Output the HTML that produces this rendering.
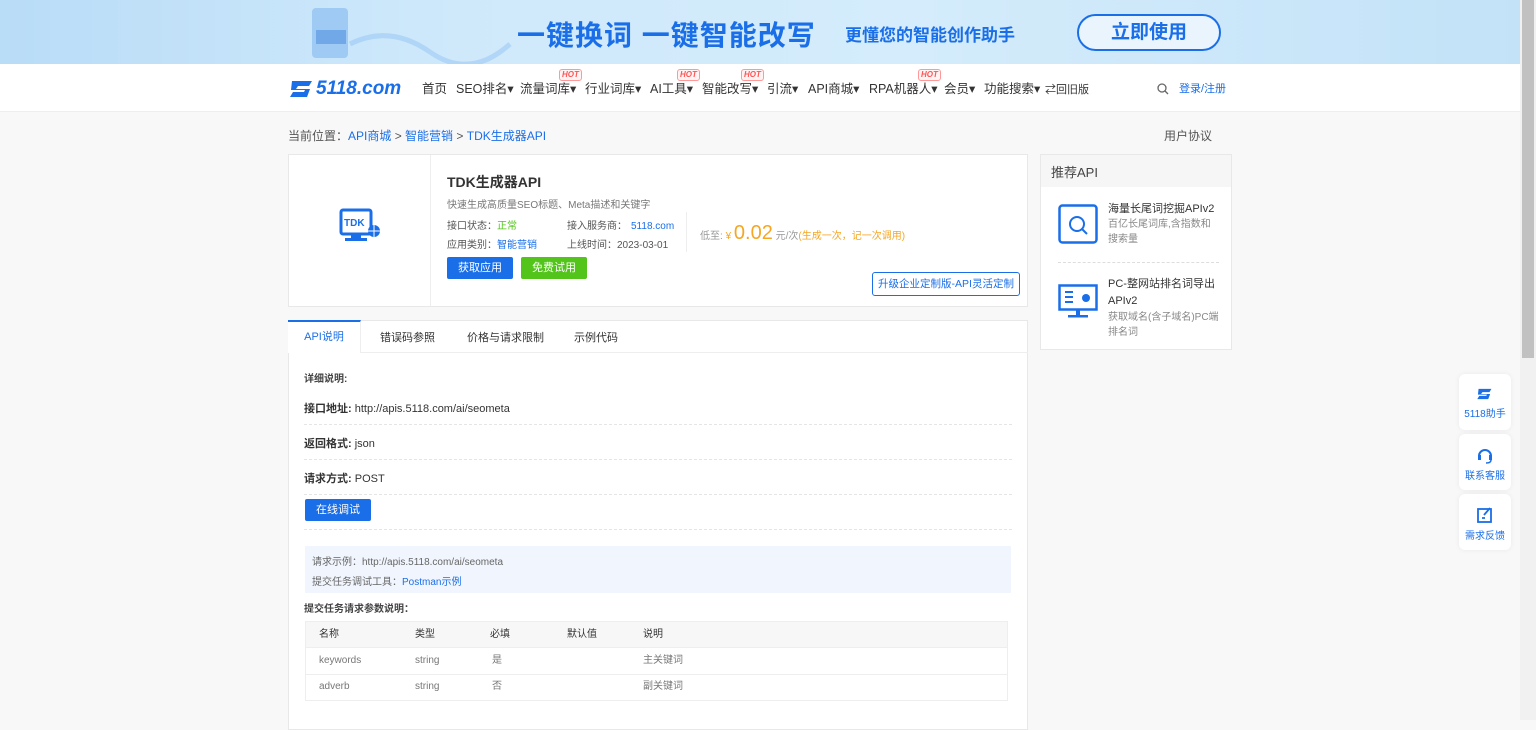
<!DOCTYPE html>
<html><head><meta charset="utf-8"><style>
*{margin:0;padding:0;box-sizing:border-box}
body{width:1536px;height:720px;overflow:hidden;background:#f8f8f8;font-family:"Liberation Sans","Noto Sans CJK SC",sans-serif;font-size:12px;color:#333;position:relative}
.a{position:absolute}
.banner{left:0;top:0;width:1520px;height:64px;background:linear-gradient(90deg,#b9dcf7 0%,#cfe9fb 30%,#d4ecfb 60%,#c3e2f8 100%)}
.nav{left:0;top:64px;width:1520px;height:48px;background:#fff;border-bottom:1px solid #eee}
.nav span{position:absolute;top:17px;font-size:12.5px;color:#333;white-space:nowrap;line-height:16px}
.hot{position:absolute;top:5px;font-size:8px;color:#f55;border:1px solid #f99;border-radius:3px;padding:0 2px;font-style:italic;font-weight:bold;background:#fff3f3;line-height:10px}
.card{background:#fff;border:1px solid #e8e8e8}
.blue{color:#1a6fe8}
.btn{position:absolute;color:#fff;font-size:11px;text-align:center;border-radius:2px}
.dash{position:absolute;left:304px;width:708px;border-top:1px dashed #e5e5e5}
.scroll{left:1520px;top:0;width:16px;height:720px;background:#f1f1f1}
.side{position:absolute;left:1459px;width:52px;height:56px;background:#fff;border-radius:6px;box-shadow:0 0 6px rgba(0,0,0,.06);text-align:center;color:#1a6fe8;font-size:10px}
.t{position:absolute;font-size:10px;line-height:12px}
</style></head><body>
<div class="a banner"></div>
<svg class="a" style="left:290px;top:0" width="230" height="64"><rect x="22" y="8" width="36" height="50" rx="4" fill="#6aa8ea" opacity=".45"/><rect x="26" y="30" width="30" height="14" fill="#3a80dc" opacity=".45"/><path d="M60 44 Q100 24 140 52 T220 44" stroke="#7ab4f0" stroke-width="5" fill="none" opacity=".35"/></svg>
<div class="a" style="left:517px;top:14px;font-size:28px;font-weight:bold;color:#1a6fe8;letter-spacing:1px">一键换词 一键智能改写</div>
<div class="a" style="left:845px;top:21px;font-size:17px;font-weight:bold;color:#1a6fe8">更懂您的智能创作助手</div>
<div class="a" style="left:1077px;top:14px;width:144px;height:37px;border:2px solid #1a6fe8;border-radius:19px;background:#e9f4fd;text-align:center;line-height:33px;font-size:19px;font-weight:bold;color:#1a6fe8">立即使用</div>
<div class="a nav">
<svg style="position:absolute;left:288px;top:13px" width="28" height="24" viewBox="0 0 28 24"><path d="M4 4h20l-3 5H10l-2 3h14l-3 8H2l3-5h11l1-2H3z" fill="#1a6fe8"/></svg>
<span style="left:316px;top:14px;font-size:19px;line-height:22px;font-weight:bold;font-style:italic;color:#1a6fe8">5118.com</span>
<span style="left:422px">首页</span><span style="left:456px">SEO排名▾</span><span style="left:520px">流量词库▾</span><span style="left:585px">行业词库▾</span><span style="left:650px">AI工具▾</span><span style="left:702px">智能改写▾</span><span style="left:767px">引流▾</span><span style="left:808px">API商城▾</span><span style="left:869px">RPA机器人▾</span><span style="left:944px">会员▾</span><span style="left:984px">功能搜索▾</span><span style="left:1045px;font-size:11px;top:18px">⇄回旧版</span>
<div class="hot" style="left:559px">HOT</div><div class="hot" style="left:677px">HOT</div><div class="hot" style="left:741px">HOT</div><div class="hot" style="left:918px">HOT</div>
<svg style="position:absolute;left:1157px;top:19px" width="12" height="12"><circle cx="5" cy="5" r="4" stroke="#666" fill="none" stroke-width="1.3"/><path d="M8 8l3 3" stroke="#666" stroke-width="1.3"/></svg>
<span style="left:1179px;top:17px;font-size:11px;color:#1a6fe8">登录/注册</span>
</div>
<div class="a" style="left:288px;top:127px;color:#555">当前位置：<span class="blue">API商城</span> &gt; <span class="blue">智能营销</span> &gt; <span class="blue">TDK生成器API</span></div>
<div class="a" style="left:1164px;top:127px;color:#555;font-size:12px">用户协议</div>
<div class="a card" style="left:288px;top:154px;width:740px;height:153px"></div>
<div class="a" style="left:430px;top:155px;width:1px;height:151px;background:#eee"></div>
<svg class="a" style="left:339px;top:208px" width="44" height="36" viewBox="0 0 44 36"><rect x="2" y="2" width="30" height="24" rx="2" fill="none" stroke="#1a6fe8" stroke-width="3"/><text x="5" y="18" font-size="10" font-weight="bold" fill="#1a6fe8" font-family="Liberation Sans">TDK</text><rect x="12" y="26" width="10" height="4" fill="#1a6fe8"/><rect x="6" y="30" width="22" height="3" fill="#1a6fe8"/><circle cx="35" cy="23" r="6" fill="#1a6fe8"/><path d="M29 23h12M35 17v12" stroke="#fff"/></svg>
<div class="a" style="left:447px;top:172px;font-size:14px;font-weight:bold;color:#333">TDK生成器API</div>
<div class="a" style="left:447px;top:196px;font-size:10px;color:#777">快速生成高质量SEO标题、Meta描述和关键字</div>
<div class="a" style="left:447px;top:217px;font-size:10px;color:#555">接口状态：<span style="color:#52c41a">正常</span></div>
<div class="a" style="left:567px;top:217px;font-size:10px;color:#555">接入服务商：<span class="blue" style="margin-left:4px">5118.com</span></div>
<div class="a" style="left:447px;top:236px;font-size:10px;color:#555">应用类别：<span class="blue">智能营销</span></div>
<div class="a" style="left:567px;top:236px;font-size:10px;color:#555">上线时间：2023-03-01</div>
<div class="a" style="left:686px;top:212px;width:1px;height:40px;background:#eee"></div>
<div class="a" style="left:700px;top:222px;font-size:10px;color:#999;white-space:nowrap">低至: <span style="color:#f5a623">¥ <span style="font-size:20px">0.02</span></span> 元/次<span style="color:#f5a623">(生成一次，记一次调用)</span></div>
<div class="btn" style="left:447px;top:257px;width:66px;height:22px;line-height:22px;background:#1a6fe8">获取应用</div>
<div class="btn" style="left:521px;top:257px;width:66px;height:22px;line-height:22px;background:#52c41a">免费试用</div>
<div class="a" style="left:872px;top:272px;width:148px;height:24px;border:1px solid #1a6fe8;border-radius:3px;color:#1a6fe8;font-size:10.5px;text-align:center;line-height:22px">升级企业定制版-API灵活定制</div>
<div class="a card" style="left:288px;top:320px;width:740px;height:410px"></div>
<div class="a" style="left:288px;top:352px;width:740px;border-top:1px solid #eee"></div>
<div class="a" style="left:288px;top:320px;width:73px;height:33px;background:#fff;border-top:2px solid #1a6fe8;border-right:1px solid #eee;text-align:center;line-height:30px;color:#1a6fe8;font-size:11px">API说明</div>
<div class="a" style="left:380px;top:329px;font-size:11px">错误码参照</div>
<div class="a" style="left:467px;top:329px;font-size:11px">价格与请求限制</div>
<div class="a" style="left:574px;top:329px;font-size:11px">示例代码</div>
<div class="a" style="left:304px;top:370px;font-size:10px;font-weight:bold;color:#444">详细说明:</div>
<div class="a" style="left:304px;top:400px;font-size:11px"><b>接口地址:</b> http://apis.5118.com/ai/seometa</div>
<div class="dash" style="top:424px"></div>
<div class="a" style="left:304px;top:435px;font-size:11px"><b>返回格式:</b> json</div>
<div class="dash" style="top:459px"></div>
<div class="a" style="left:304px;top:470px;font-size:11px"><b>请求方式:</b> POST</div>
<div class="dash" style="top:494px"></div>
<div class="btn" style="left:305px;top:499px;width:66px;height:22px;line-height:22px;background:#1a6fe8">在线调试</div>
<div class="dash" style="top:529px"></div>
<div class="a" style="left:305px;top:546px;width:706px;height:47px;background:#f1f6fe"></div>
<div class="a" style="left:312px;top:553px;font-size:10px;color:#666">请求示例：http://apis.5118.com/ai/seometa</div>
<div class="a" style="left:312px;top:573px;font-size:10px;color:#666">提交任务调试工具：<span class="blue">Postman示例</span></div>
<div class="a" style="left:304px;top:600px;font-size:10px;font-weight:bold;color:#444">提交任务请求参数说明：</div>
<div class="a" style="left:305px;top:621px;width:703px;height:80px;border:1px solid #eee;background:#fff"></div>
<div class="a" style="left:306px;top:622px;width:701px;height:26px;background:#f7f7f7;border-bottom:1px solid #eee"></div>
<div class="a" style="left:306px;top:674px;width:701px;border-top:1px solid #eee"></div>
<div class="t" style="left:319px;top:629px">名称</div><div class="t" style="left:415px;top:629px">类型</div><div class="t" style="left:490px;top:629px">必填</div><div class="t" style="left:567px;top:629px">默认值</div><div class="t" style="left:643px;top:629px">说明</div>
<div class="t" style="left:319px;top:655px;color:#777">keywords</div><div class="t" style="left:415px;top:655px;color:#777">string</div><div class="t" style="left:492px;top:655px;color:#777">是</div><div class="t" style="left:643px;top:655px;color:#777">主关键词</div>
<div class="t" style="left:319px;top:681px;color:#777">adverb</div><div class="t" style="left:415px;top:681px;color:#777">string</div><div class="t" style="left:492px;top:681px;color:#777">否</div><div class="t" style="left:643px;top:681px;color:#777">副关键词</div>
<div class="a card" style="left:1040px;top:154px;width:192px;height:196px"></div>
<div class="a" style="left:1041px;top:155px;width:190px;height:32px;background:#f6f6f6;padding:7px 10px;font-size:13px;color:#444">推荐API</div>
<svg class="a" style="left:1058px;top:204px" width="40" height="40"><rect x="1.5" y="1.5" width="37" height="37" rx="3" fill="none" stroke="#1a6fe8" stroke-width="2.5"/><circle cx="19" cy="20" r="7" fill="none" stroke="#1a6fe8" stroke-width="2"/><path d="M24 25l5 5" stroke="#1a6fe8" stroke-width="2"/></svg>
<div class="a" style="left:1108px;top:200px;font-size:11px;color:#333">海量长尾词挖掘APIv2</div>
<div class="a" style="left:1108px;top:217px;font-size:10px;color:#888;width:112px;line-height:15px">百亿长尾词库,含指数和搜索量</div>
<div class="a" style="left:1058px;top:262px;width:161px;border-top:1px dashed #ddd"></div>
<svg class="a" style="left:1058px;top:284px" width="40" height="36"><rect x="1.5" y="1.5" width="37" height="24" fill="none" stroke="#1a6fe8" stroke-width="2.5"/><path d="M7 8h8M7 13h8M7 18h8" stroke="#1a6fe8" stroke-width="2"/><circle cx="28" cy="14" r="4" fill="#1a6fe8"/><rect x="18" y="26" width="4" height="5" fill="#1a6fe8"/><rect x="10" y="31" width="20" height="2.5" fill="#1a6fe8"/></svg>
<div class="a" style="left:1108px;top:276px;font-size:11px;color:#333;width:112px;line-height:17px">PC-整网站排名词导出APIv2</div>
<div class="a" style="left:1108px;top:310px;font-size:10px;color:#888;width:112px;line-height:15px">获取域名(含子域名)PC端排名词</div>
<div class="side" style="top:374px"><svg style="margin-top:12px" width="18" height="16" viewBox="0 0 28 24"><path d="M4 4h20l-3 5H10l-2 3h14l-3 8H2l3-5h11l1-2H3z" fill="#1a6fe8"/></svg><div>5118助手</div></div>
<div class="side" style="top:434px"><svg style="margin-top:12px" width="18" height="18"><path d="M3 10a6 6 0 0 1 12 0" stroke="#1a6fe8" stroke-width="2" fill="none"/><rect x="2" y="9" width="3" height="5" fill="#1a6fe8"/><rect x="13" y="9" width="3" height="5" fill="#1a6fe8"/><path d="M15 14q0 3-5 3" stroke="#1a6fe8" stroke-width="1.5" fill="none"/></svg><div>联系客服</div></div>
<div class="side" style="top:494px"><svg style="margin-top:12px" width="18" height="18"><rect x="2" y="3" width="13" height="13" fill="none" stroke="#1a6fe8" stroke-width="1.8"/><path d="M6 12l3 0M8 9l6-7" stroke="#1a6fe8" stroke-width="1.8"/></svg><div>需求反馈</div></div>
<div class="a scroll"><div style="position:absolute;left:2px;top:0;width:12px;height:358px;background:#c1c1c1"></div></div>
</body></html>
